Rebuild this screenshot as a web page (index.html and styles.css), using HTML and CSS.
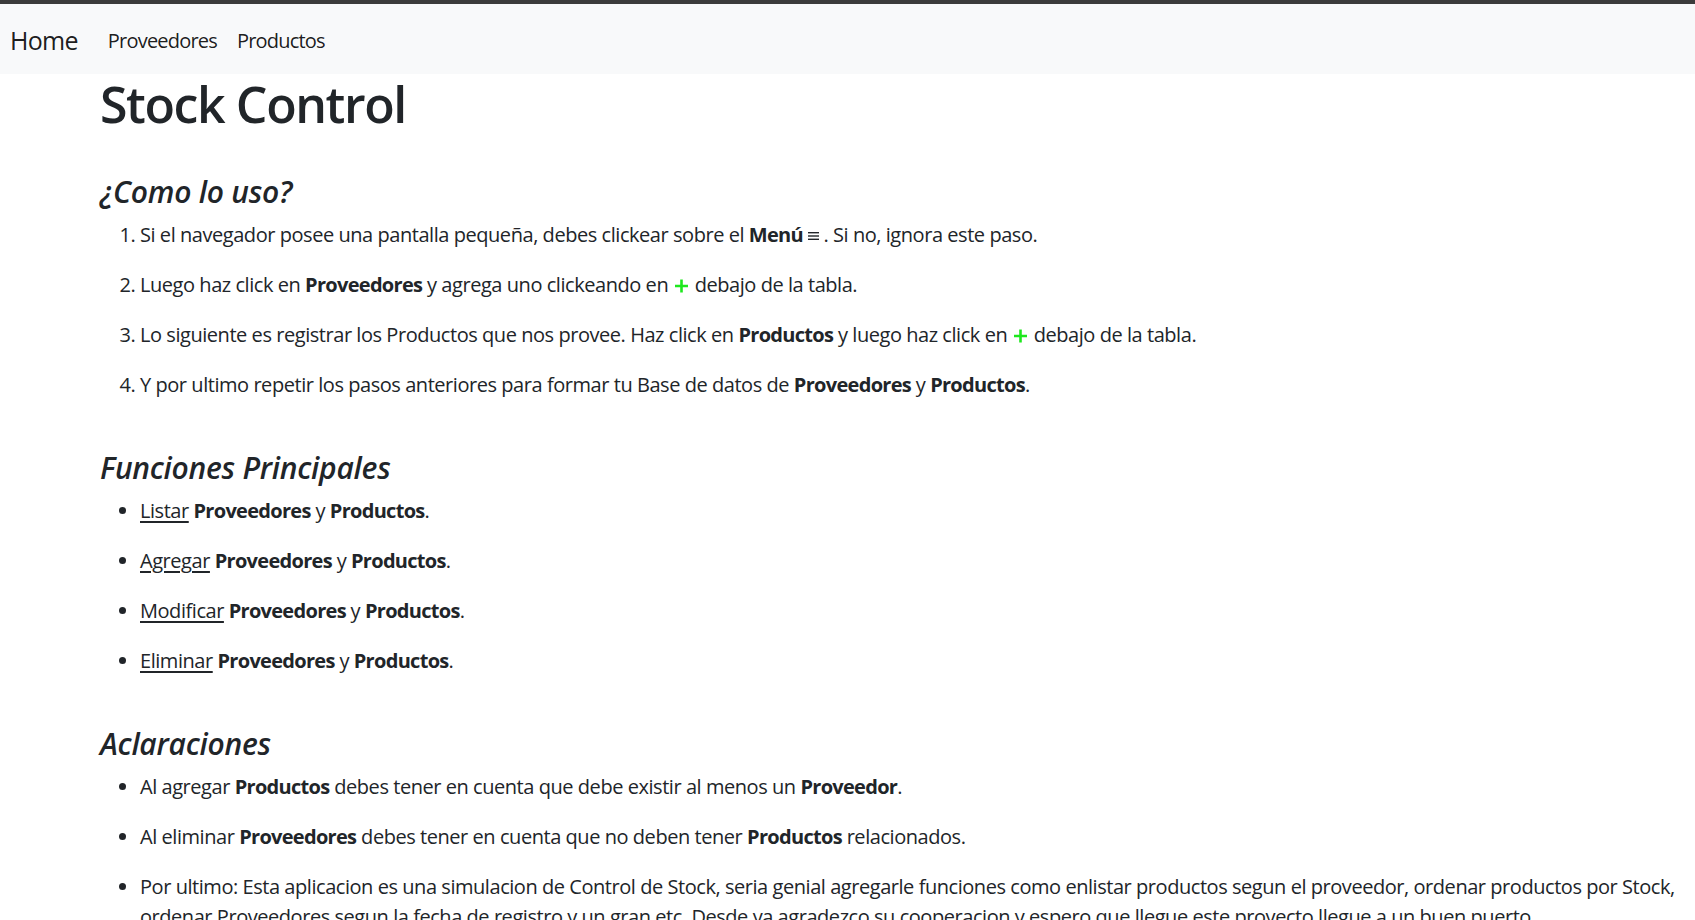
FILE: index.html
```html
<!DOCTYPE html>
<html lang="es">
<head>
<meta charset="utf-8">
<title>Stock Control</title>
<link rel="stylesheet" href="styles.css">
</head>
<body>
<div class="topline"></div>
<nav class="navbar">
  <a class="brand" href="#">Home</a>
  <ul class="nav">
    <li><a class="nav-link" href="#">Proveedores</a></li>
    <li><a class="nav-link" href="#">Productos</a></li>
  </ul>
</nav>
<main class="content">
  <h1 class="title">Stock Control</h1>

  <h4 class="section">¿Como lo uso?</h4>
  <ol class="list">
    <li><p>Si el navegador posee una pantalla pequeña, debes clickear sobre el <b>Menú</b> <svg class="menu-icon" width="11" height="8" viewBox="0 0 11 8"><rect x="0" y="0" width="11" height="1.4" fill="#212529"/><rect x="0" y="3.3" width="11" height="1.4" fill="#212529"/><rect x="0" y="6.6" width="11" height="1.4" fill="#212529"/></svg> . Si no, ignora este paso.</p></li>
    <li><p>Luego haz click en <b>Proveedores</b> y agrega uno clickeando en <svg class="plus" width="17" height="14" viewBox="0 0 17 14"><path d="M8.5 0.5V13.5M2 7H15" stroke="#1ee81e" stroke-width="2.6"/></svg> debajo de la tabla.</p></li>
    <li><p>Lo siguiente es registrar los Productos que nos provee. Haz click en <b>Productos</b> y luego haz click en <svg class="plus" width="17" height="14" viewBox="0 0 17 14"><path d="M8.5 0.5V13.5M2 7H15" stroke="#1ee81e" stroke-width="2.6"/></svg> debajo de la tabla.</p></li>
    <li><p>Y por ultimo repetir los pasos anteriores para formar tu Base de datos de <b>Proveedores</b> y <b>Productos</b>.</p></li>
  </ol>

  <h4 class="section">Funciones Principales</h4>
  <ul class="list">
    <li><p><a class="link" href="#">Listar</a> <b>Proveedores</b> y <b>Productos</b>.</p></li>
    <li><p><a class="link" href="#">Agregar</a> <b>Proveedores</b> y <b>Productos</b>.</p></li>
    <li><p><a class="link" href="#">Modificar</a> <b>Proveedores</b> y <b>Productos</b>.</p></li>
    <li><p><a class="link" href="#">Eliminar</a> <b>Proveedores</b> y <b>Productos</b>.</p></li>
  </ul>

  <h4 class="section">Aclaraciones</h4>
  <ul class="list">
    <li><p>Al agregar <b>Productos</b> debes tener en cuenta que debe existir al menos un <b>Proveedor</b>.</p></li>
    <li><p>Al eliminar <b>Proveedores</b> debes tener en cuenta que no deben tener <b>Productos</b> relacionados.</p></li>
    <li><p>Por ultimo: Esta aplicacion es una simulacion de Control de Stock, seria genial agregarle funciones como enlistar productos segun el proveedor, ordenar productos por Stock, ordenar Proveedores segun la fecha de registro y un gran etc. Desde ya agradezco su cooperacion y espero que llegue este proyecto llegue a un buen puerto.</p></li>
  </ul>
</main>
</body>
</html>
```
FILE: styles.css
```css
html {
  scrollbar-width: none;
}
html::-webkit-scrollbar {
  display: none;
}
body {
  margin: 0;
  font-family: "Open Sans", "Noto Sans", "Liberation Sans", sans-serif;
  font-size: 20px;
  line-height: 30px;
  color: #212529;
  background: #fff;
  letter-spacing: -0.45px;
}
.topline {
  height: 4px;
  background: #3b3b3b;
}
.navbar {
  display: flex;
  align-items: center;
  background: #f8f9fa;
  padding: 12px 10px 8px;
}
.brand {
  font-size: 25px;
  line-height: 37px;
  padding: 6px 0 7px;
  margin-right: 20px;
  color: rgba(0, 0, 0, 0.9);
  text-decoration: none;
  letter-spacing: -0.7px;
}
.nav {
  display: flex;
  list-style: none;
  margin: 0;
  padding: 0;
}
.nav-link {
  display: block;
  padding: 10px 10px;
  color: rgba(0, 0, 0, 0.9);
  text-decoration: none;
  letter-spacing: -0.8px;
}
.content {
  padding: 0 12px 0 100px;
}
.title {
  font-size: 50px;
  line-height: 60px;
  font-weight: 600;
  margin: 0 0 40px;
  letter-spacing: -1.4px;
}
.section {
  font-size: 30px;
  line-height: 36px;
  font-weight: 600;
  font-style: italic;
  margin: 0 0 10px;
  letter-spacing: -0.25px;
}
.list {
  margin: 0 0 50px;
  padding-left: 40px;
}
.list p {
  margin: 0 0 20px;
}
.list b {
  font-weight: 700;
  letter-spacing: -0.7px;
}
.link {
  color: #212529;
  text-decoration: underline;
  text-underline-offset: 3px;
}
.menu-icon {
  vertical-align: 2px;
}
.plus {
  vertical-align: -1px;
}
```
